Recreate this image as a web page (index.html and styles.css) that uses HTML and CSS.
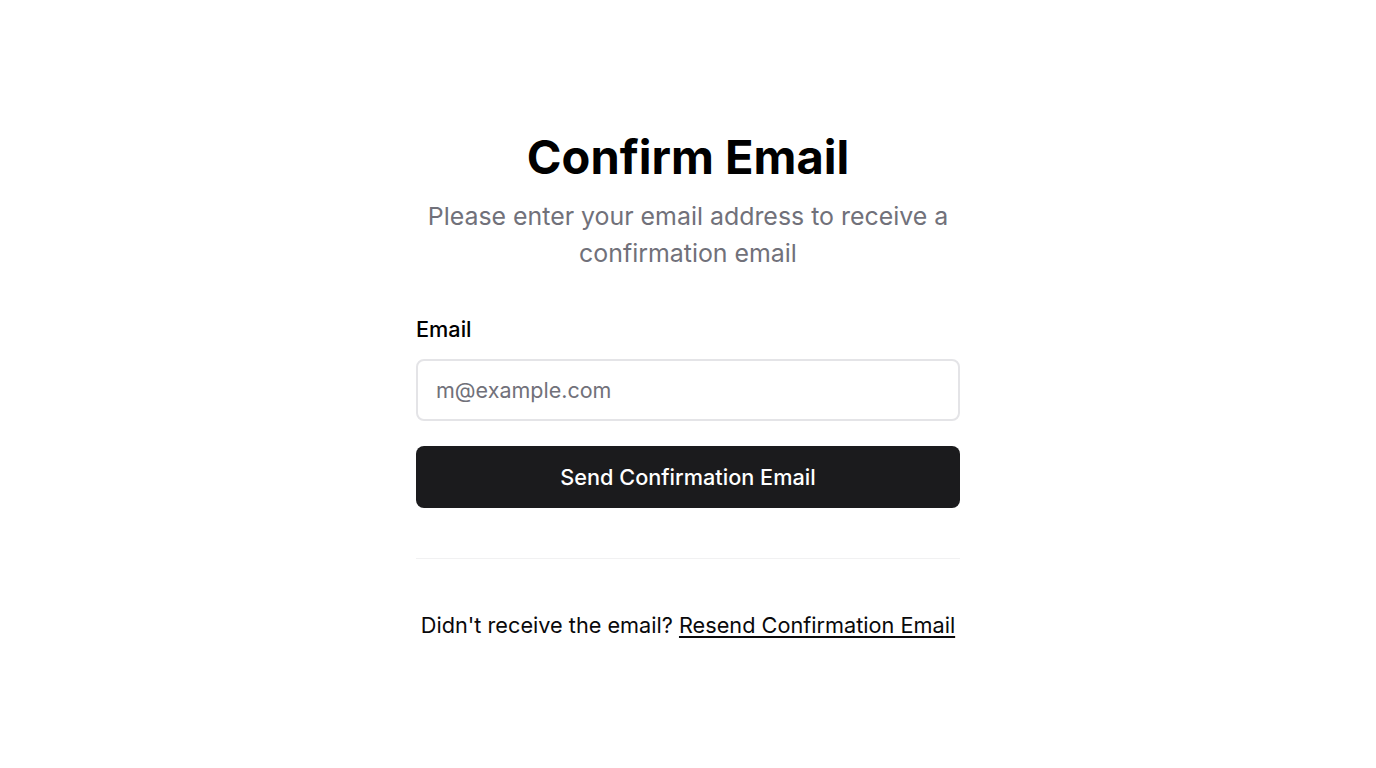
FILE: index.html
```html
<!DOCTYPE html>
<html lang="en">
<head>
<meta charset="utf-8">
<title>Confirm Email</title>
<link rel="stylesheet" href="styles.css">
</head>
<body>
<main class="page">
  <section class="card">
    <header class="head">
      <h1 class="title">Confirm Email</h1>
      <p class="subtitle">Please enter your email address to receive a confirmation email</p>
    </header>
    <form class="form">
      <label class="label" for="email">Email</label>
      <input class="input" id="email" type="email" placeholder="m@example.com">
      <button class="button" type="button">Send Confirmation Email</button>
    </form>
    <hr class="sep">
    <p class="footer">Didn't receive the email? <a class="link" href="#">Resend Confirmation Email</a></p>
  </section>
</main>
</body>
</html>
```
FILE: styles.css
```css
* { box-sizing: border-box; }
html, body { margin: 0; padding: 0; background: #fff; }
body { font-family: Inter, "Noto Sans", sans-serif; color: #09090b; }
.page {
  min-height: 768px;
  display: flex;
  justify-content: center;
  padding-top: 127px;
}
.card { width: 544px; display: flex; flex-direction: column; }
.head { text-align: center; }
.title {
  margin: 0;
  font-size: 47px;
  font-weight: 700;
  line-height: 60px;
  color: #000;
}
.subtitle {
  margin: 11px 0 0;
  font-size: 24.9px;
  line-height: 37px;
  color: #71717a;
}
.form { display: flex; flex-direction: column; margin-top: 43px; }
.label { font-size: 21.7px; font-weight: 500; line-height: 28px; color: #000; }
.input {
  margin-top: 16px;
  height: 62px;
  border: 2px solid #e4e4e7;
  border-radius: 8px;
  padding: 0 18px;
  font-family: inherit;
  font-size: 21.5px;
  color: #09090b;
  outline: none;
}
.input::placeholder { color: #71717a; }
.button {
  margin-top: 25px;
  height: 62px;
  border: none;
  border-radius: 8px;
  background: #1b1b1d;
  color: #fff;
  font-family: inherit;
  font-size: 21.7px;
  font-weight: 500;
}
.sep { margin: 50px 0 0; border: none; border-top: 1px solid #f1f1f2; }
.footer {
  margin: 52px 0 0;
  text-align: center;
  font-size: 21.7px;
  line-height: 28px;
  color: #09090b;
}
.link { color: #09090b; text-decoration: underline; text-underline-offset: 3px; }
```
